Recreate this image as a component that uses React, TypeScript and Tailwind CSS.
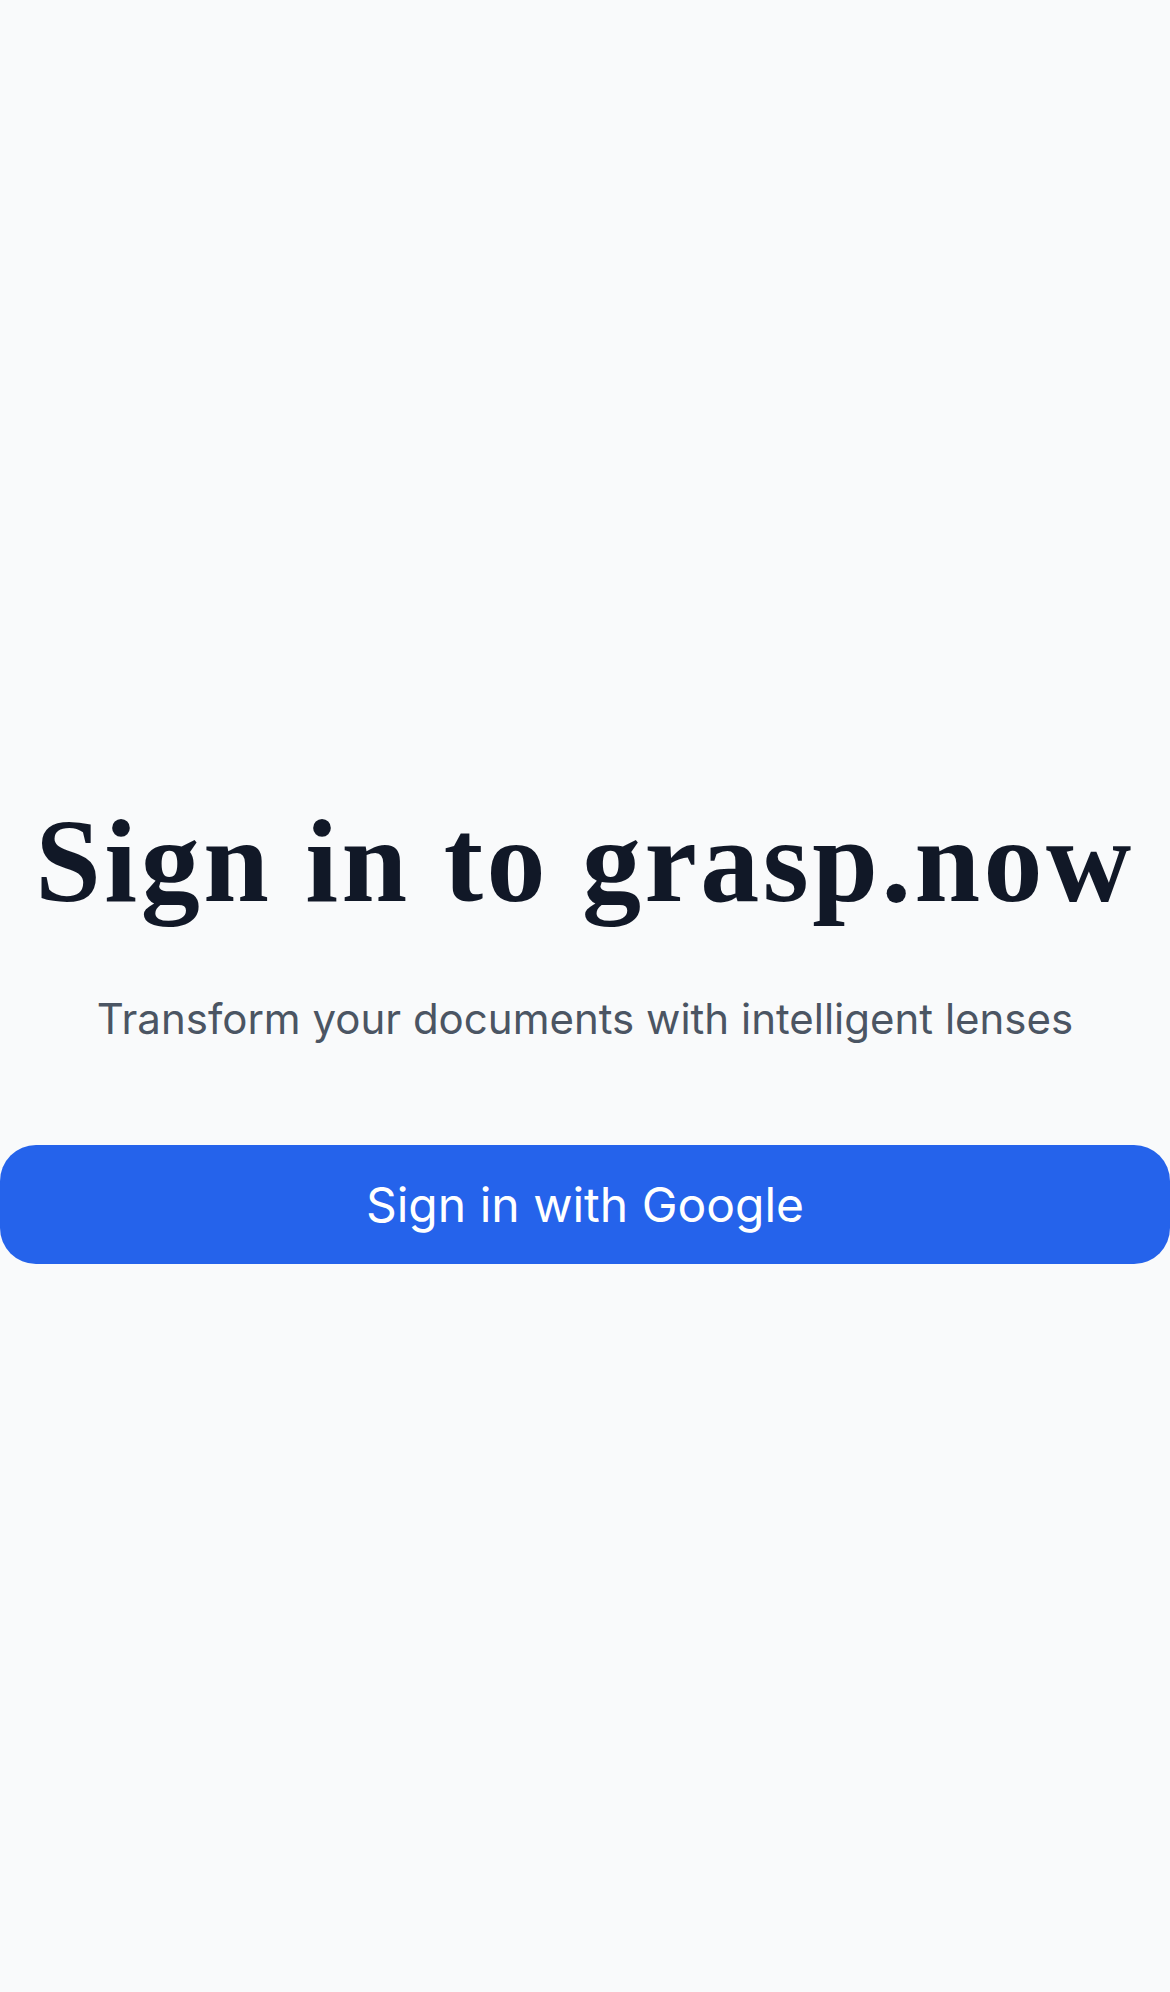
export default function App() {
  return (
    <div className="min-h-screen w-full bg-[#f9fafb] flex flex-col items-center pt-[803px]">
      {/* Heading */}
      <h1 className="font-['Liberation_Serif',serif] text-[118px] leading-none tracking-[3.5px] font-bold text-[#111827] text-center whitespace-nowrap">
        Sign in to grasp.now
      </h1>

      {/* Tagline */}
      <p className="mt-[68px] font-['Inter',sans-serif] text-[42px] leading-[60px] text-[#4b5563] text-center">
        Transform your documents with intelligent lenses
      </p>

      {/* CTA */}
      <button className="mt-[96px] w-full h-[119px] rounded-[36px] bg-[#2563eb] text-white font-['Inter',sans-serif] text-[48px] font-normal flex items-center justify-center">
        Sign in with Google
      </button>
    </div>
  );
}
